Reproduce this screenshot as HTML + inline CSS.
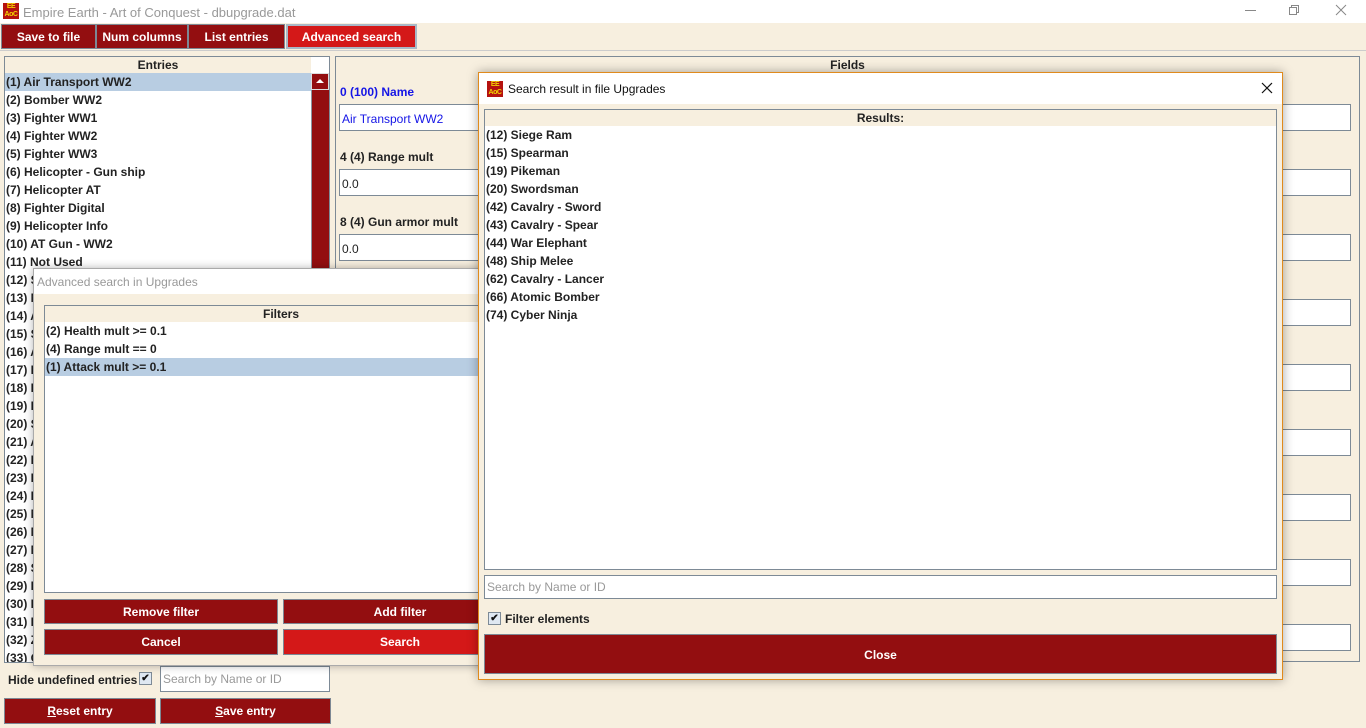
<!DOCTYPE html>
<html><head><meta charset="utf-8">
<style>
*{box-sizing:border-box;margin:0;padding:0}
body{width:1366px;height:728px;background:#f7efdf;font-family:"Liberation Sans",sans-serif;font-size:12px;font-weight:bold;color:#222;position:relative;overflow:hidden}
.a{position:absolute}
.btn{position:absolute;background:#930e10;color:#fff;text-align:center;font-weight:bold;font-size:12px;border:1px solid #7d8894}
.bright{background:#d41818}
.row{height:18px;line-height:19px;padding-left:1px;white-space:nowrap}
.sel{background:#b8cde2}
.inp{position:absolute;background:#fff;border:1px solid #7d8a96;font-weight:normal;padding-left:2px}
.hdr{text-align:center;height:16px;line-height:17px;background:#f7efdf}
.logo{position:absolute;width:16px;height:16px;background:#b5120f;color:#f3d400;font-size:7px;line-height:8px;text-align:center;font-weight:bold;letter-spacing:-0.5px}
.cb{position:absolute;width:13px;height:13px;border:1px solid #7d8a96;background:#dfe8f2;font-size:10px;line-height:11px;text-align:center;color:#111}
</style></head><body>
<div class="a" style="left:0;top:0;width:1366px;height:23px;background:#fff"></div>
<div class="logo" style="left:3px;top:3px">EE<br>AoC</div>
<div class="a" style="left:23px;top:5px;font-weight:normal;color:#999;font-size:13px">Empire Earth - Art of Conquest - dbupgrade.dat</div>
<div class="a" style="left:1245px;top:10px;width:11px;height:1px;background:#888"></div>
<div class="a" style="left:1291px;top:5px;width:8px;height:8px;border:1px solid #888"></div>
<div class="a" style="left:1289px;top:7px;width:8px;height:8px;border:1px solid #888;background:#fff"></div>
<svg class="a" style="left:1335px;top:4px" width="12" height="12"><path d="M1 1L11 11M11 1L1 11" stroke="#888" stroke-width="1"/></svg>
<div class="btn" style="left:1px;top:24px;width:95px;height:25px;line-height:24px">Save to file</div>
<div class="btn" style="left:96px;top:24px;width:92px;height:25px;line-height:24px">Num columns</div>
<div class="btn" style="left:188px;top:24px;width:97px;height:25px;line-height:24px">List entries</div>
<div class="btn bright" style="left:286px;top:24px;width:131px;height:25px;line-height:22px;border:2px solid #a9b8c6">Advanced search</div>
<div class="a" style="left:0;top:50px;width:1366px;height:1px;background:#ccc"></div>
<div class="a" style="left:4px;top:56px;width:326px;height:607px;border:1px solid #7d8a96;background:#fff;overflow:hidden">
<div class="hdr" style="width:306px">Entries</div>
<div style="width:306px">
<div class="row sel">(1) Air Transport WW2</div>
<div class="row">(2) Bomber WW2</div>
<div class="row">(3) Fighter WW1</div>
<div class="row">(4) Fighter WW2</div>
<div class="row">(5) Fighter WW3</div>
<div class="row">(6) Helicopter - Gun ship</div>
<div class="row">(7) Helicopter AT</div>
<div class="row">(8) Fighter Digital</div>
<div class="row">(9) Helicopter Info</div>
<div class="row">(10) AT Gun - WW2</div>
<div class="row">(11) Not Used</div>
<div class="row">(12) Siege Ram</div><div class="row">(13) Null</div><div class="row">(14) Archer</div><div class="row">(15) Spearman</div><div class="row">(16) Archer</div><div class="row">(17) Pikeman</div><div class="row">(18) Light</div><div class="row">(19) Pikeman</div><div class="row">(20) Swordsman</div><div class="row">(21) Axe</div><div class="row">(22) Bow</div><div class="row">(23) Bow</div><div class="row">(24) Pike</div><div class="row">(25) Mace</div><div class="row">(26) Mace</div><div class="row">(27) Mace</div><div class="row">(28) Sling</div><div class="row">(29) Pike</div><div class="row">(30) Pike</div><div class="row">(31) Pike</div><div class="row">(32) Zeal</div><div class="row">(33) Gun</div>
</div>
<div class="a" style="left:306px;top:16px;width:18px;height:590px;background:#930e10;border-left:1px solid #8a96a3"></div>
<div class="a" style="left:306px;top:16px;width:18px;height:17px;background:#930e10;border:1px solid #ddd"></div>
<svg class="a" style="left:310px;top:21px" width="10" height="6"><path d="M1 5L5 1L9 5Z" fill="#fff"/></svg>
</div>
<div class="a" style="left:335px;top:56px;width:1025px;height:606px;border:1px solid #7d8a96"></div>
<div class="a" style="left:335px;top:58px;width:1025px;text-align:center">Fields</div>
<div class="a" style="left:340px;top:85px;color:#1515e6">0 (100) Name</div>
<div class="inp" style="left:339px;top:104px;width:1012px;height:27px;line-height:28px;color:#1515e6">Air Transport WW2</div>
<div class="a" style="left:340px;top:150px">4 (4) Range mult</div>
<div class="inp" style="left:339px;top:169px;width:1012px;height:27px;line-height:28px">0.0</div>
<div class="a" style="left:340px;top:215px">8 (4) Gun armor mult</div>
<div class="inp" style="left:339px;top:234px;width:1012px;height:27px;line-height:28px">0.0</div>
<div class="inp" style="left:339px;top:299px;width:1012px;height:27px"></div>
<div class="inp" style="left:339px;top:364px;width:1012px;height:27px"></div>
<div class="inp" style="left:339px;top:429px;width:1012px;height:27px"></div>
<div class="inp" style="left:339px;top:494px;width:1012px;height:27px"></div>
<div class="inp" style="left:339px;top:559px;width:1012px;height:27px"></div>
<div class="inp" style="left:339px;top:624px;width:1012px;height:27px"></div>
<div class="a" style="left:8px;top:673px">Hide undefined entries</div>
<div class="cb" style="left:139px;top:672px">✔</div>
<div class="inp" style="left:160px;top:666px;width:170px;height:26px;line-height:25px;color:#999">Search by Name or ID</div>
<div class="btn" style="left:4px;top:698px;width:152px;height:26px;line-height:25px"><u>R</u>eset entry</div>
<div class="btn" style="left:160px;top:698px;width:171px;height:26px;line-height:25px"><u>S</u>ave entry</div>
<div class="a" style="left:33px;top:268px;width:460px;height:398px;background:#f7efdf;border:1px solid #aaa;box-shadow:0 0 8px rgba(0,0,0,.3)">
<div class="a" style="left:0;top:0;width:460px;height:25px;background:#fff"></div>
<div class="a" style="left:3px;top:6px;font-weight:normal;color:#999">Advanced search in Upgrades</div>
<div class="a" style="left:10px;top:36px;width:474px;height:288px;border:1px solid #7d8a96;background:#fff">
<div class="hdr">Filters</div>
<div class="row">(2) Health mult &gt;= 0.1</div>
<div class="row">(4) Range mult == 0</div>
<div class="row sel">(1) Attack mult &gt;= 0.1</div>
</div>
<div class="btn" style="left:10px;top:330px;width:234px;height:25px;line-height:24px">Remove filter</div>
<div class="btn" style="left:249px;top:330px;width:234px;height:25px;line-height:24px">Add filter</div>
<div class="btn" style="left:10px;top:360px;width:234px;height:26px;line-height:25px">Cancel</div>
<div class="btn bright" style="left:249px;top:360px;width:234px;height:26px;line-height:25px">Search</div>
</div>
<div class="a" style="left:478px;top:72px;width:805px;height:608px;background:#f7efdf;border:1px solid #e08a1c;box-shadow:0 0 10px rgba(0,0,0,.35)">
<div class="a" style="left:0;top:0;width:803px;height:31px;background:#fff"></div>
<div class="logo" style="left:8px;top:8px">EE<br>AoC</div>
<div class="a" style="left:29px;top:9px;font-weight:normal;color:#111">Search result in file Upgrades</div>
<svg class="a" style="left:782px;top:9px" width="12" height="12"><path d="M1 1L11 11M11 1L1 11" stroke="#111" stroke-width="1.2"/></svg>
<div class="a" style="left:5px;top:36px;width:793px;height:461px;border:1px solid #7d8a96;background:#fff">
<div class="hdr">Results:</div>
<div class="row">(12) Siege Ram</div>
<div class="row">(15) Spearman</div>
<div class="row">(19) Pikeman</div>
<div class="row">(20) Swordsman</div>
<div class="row">(42) Cavalry - Sword</div>
<div class="row">(43) Cavalry - Spear</div>
<div class="row">(44) War Elephant</div>
<div class="row">(48) Ship Melee</div>
<div class="row">(62) Cavalry - Lancer</div>
<div class="row">(66) Atomic Bomber</div>
<div class="row">(74) Cyber Ninja</div>
</div>
<div class="inp" style="left:5px;top:502px;width:793px;height:24px;line-height:23px;color:#999">Search by Name or ID</div>
<div class="cb" style="left:9px;top:539px">✔</div>
<div class="a" style="left:26px;top:539px">Filter elements</div>
<div class="btn" style="left:5px;top:561px;width:793px;height:40px;line-height:40px">Close</div>
</div>
</body></html>
